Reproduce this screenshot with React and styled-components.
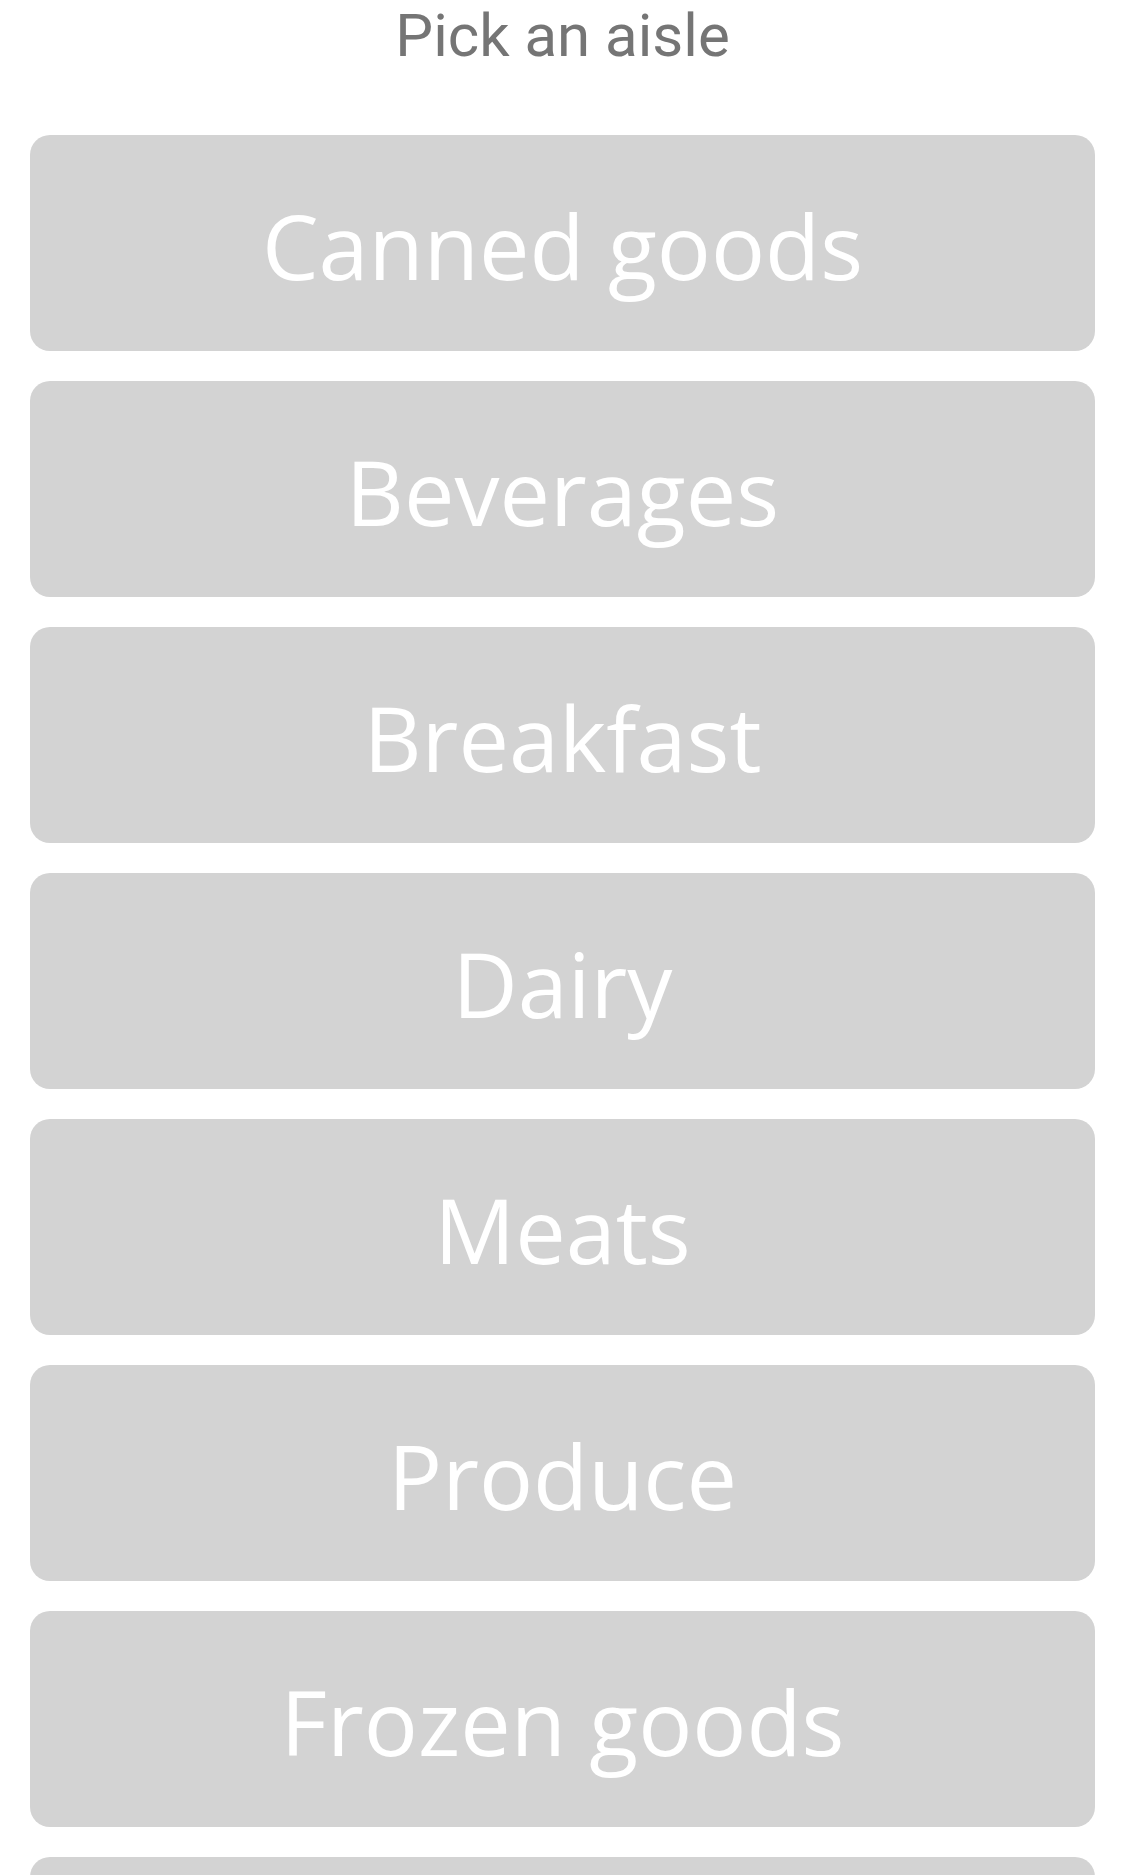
import React from 'react';
import styled, { createGlobalStyle } from 'styled-components';

const GlobalStyle = createGlobalStyle`
  body {
    margin: 0;
    background: #ffffff;
  }
`

const Page = styled.main`
  display: flex;
  flex-direction: column;
  padding: 0 30px;
`

const Title = styled.h1`
  margin: 0;
  height: 135px;
  padding-top: 1px;
  box-sizing: border-box;
  font-family: Roboto, "Liberation Sans", sans-serif;
  font-weight: 400;
  font-size: 60px;
  line-height: 70px;
  color: #757575;
  text-align: center;
`

const AisleList = styled.div`
  display: flex;
  flex-direction: column;
  gap: 30px;
`

const AisleButton = styled.button`
  display: flex;
  align-items: center;
  justify-content: center;
  height: 216px;
  width: 100%;
  border: none;
  border-radius: 20px;
  background: #d3d3d3;
  color: #ffffff;
  font-family: "Open Sans", "Liberation Sans", sans-serif;
  font-size: 90px;
  font-weight: 400;
  padding: 4px 0 0;
  cursor: pointer;
`

const aisles = [
  "Canned goods",
  "Beverages",
  "Breakfast",
  "Dairy",
  "Meats",
  "Produce",
  "Frozen goods",
  "Bakery"
]

export default function App() {
  return (
    <Page>
      <GlobalStyle />
      <Title>Pick an aisle</Title>
      <AisleList>
        {aisles.map(a => (
          <AisleButton key={a}>{a}</AisleButton>
        ))}
      </AisleList>
    </Page>
  )
}
